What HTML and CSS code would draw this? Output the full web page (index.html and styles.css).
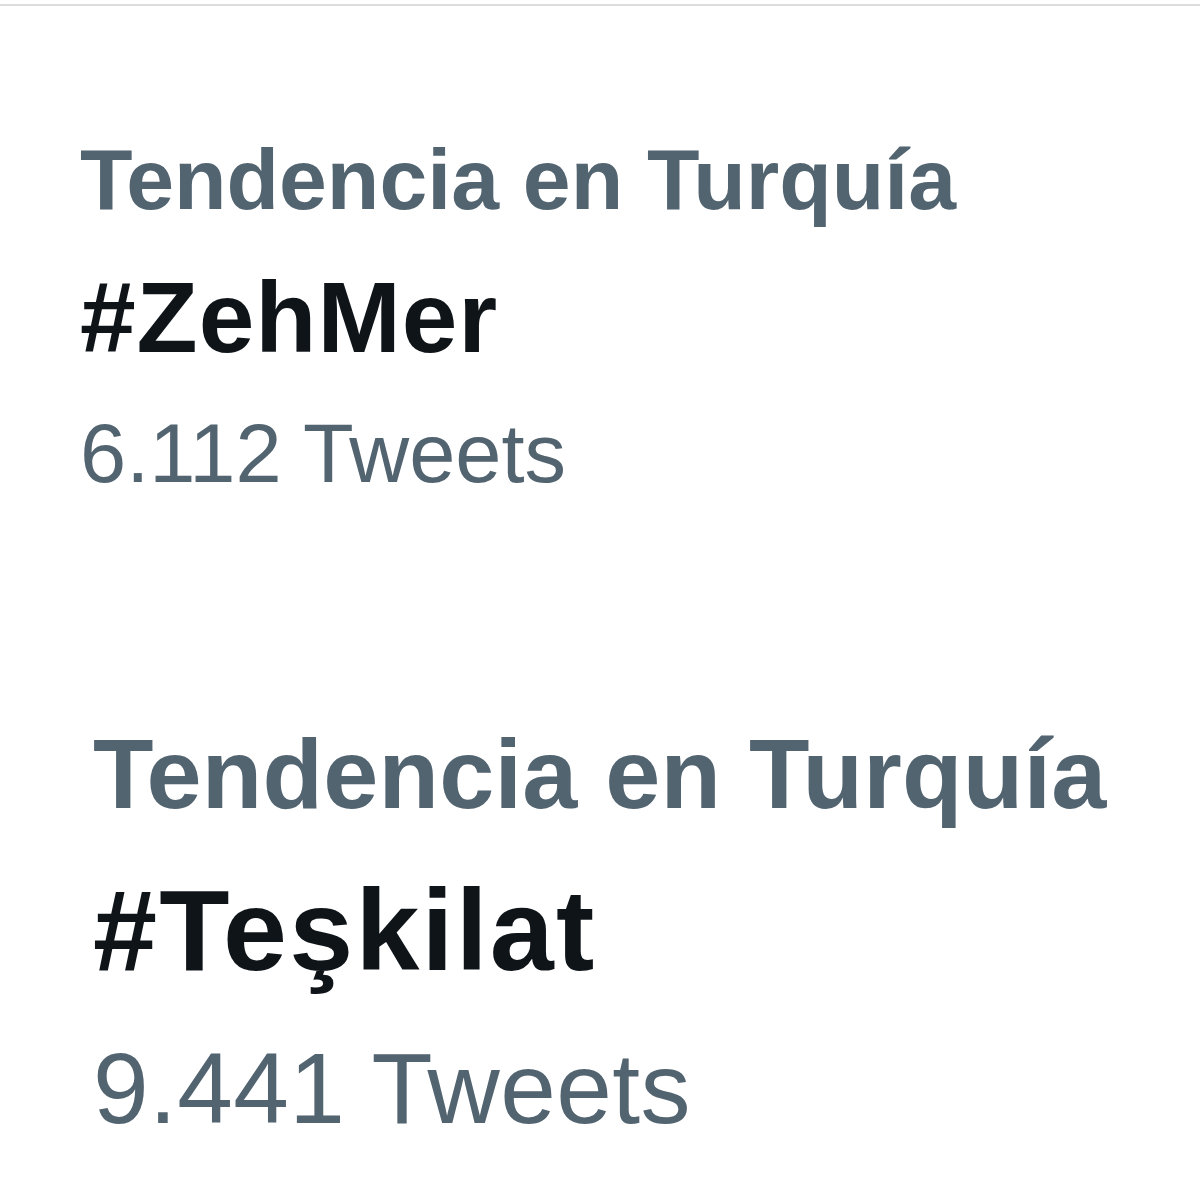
FILE: index.html
```html
<!DOCTYPE html>
<html lang="es">

<head>
    <meta charset="UTF-8">
    <meta name="viewport" content="width=device-width, initial-scale=1.0">
    <title>Tendencias</title>
    <link rel="stylesheet" href="styles.css">
</head>

<body>
    <div class="divider"></div>

    <div class="trend">
        <div class="trendContext">Tendencia en Turquía</div>
        <div class="trendName">#ZehMer</div>
        <div class="trendCount">6.112 Tweets</div>
    </div>

    <div class="trend large">
        <div class="trendContext">Tendencia en Turquía</div>
        <div class="trendName">#Teşkilat</div>
        <div class="trendCount">9.441 Tweets</div>
    </div>
</body>

</html>
```

FILE: styles.css
```css
body {
    margin: 0;
    background: #ffffff;
    font-family: "Liberation Sans", Arial, sans-serif;
}

.divider {
    height: 2px;
    margin-top: 4px;
    background: #dcdcdc;
}

.trend {
    display: flex;
    flex-direction: column;
    gap: 45px;
    margin-top: 130px;
    padding-left: 80px;
}

.trend div {
    line-height: 1;
    white-space: nowrap;
}

.trendContext {
    font-size: 86px;
    font-weight: bold;
    color: #536471;
}

.trendName {
    font-size: 100px;
    font-weight: bold;
    letter-spacing: 1px;
    color: #0f1419;
}

.trendCount {
    font-size: 83px;
    color: #536471;
}

/* second card is zoomed in a bit */
.trend.large {
    gap: 50px;
    margin-top: 229px;
    padding-left: 93px;
}

.trend.large .trendContext {
    font-size: 99px;
    letter-spacing: 0.25px;
}

.trend.large .trendName {
    font-size: 115px;
    letter-spacing: 2.2px;
}

.trend.large .trendCount {
    font-size: 100px;
    letter-spacing: 0.4px;
}
```
